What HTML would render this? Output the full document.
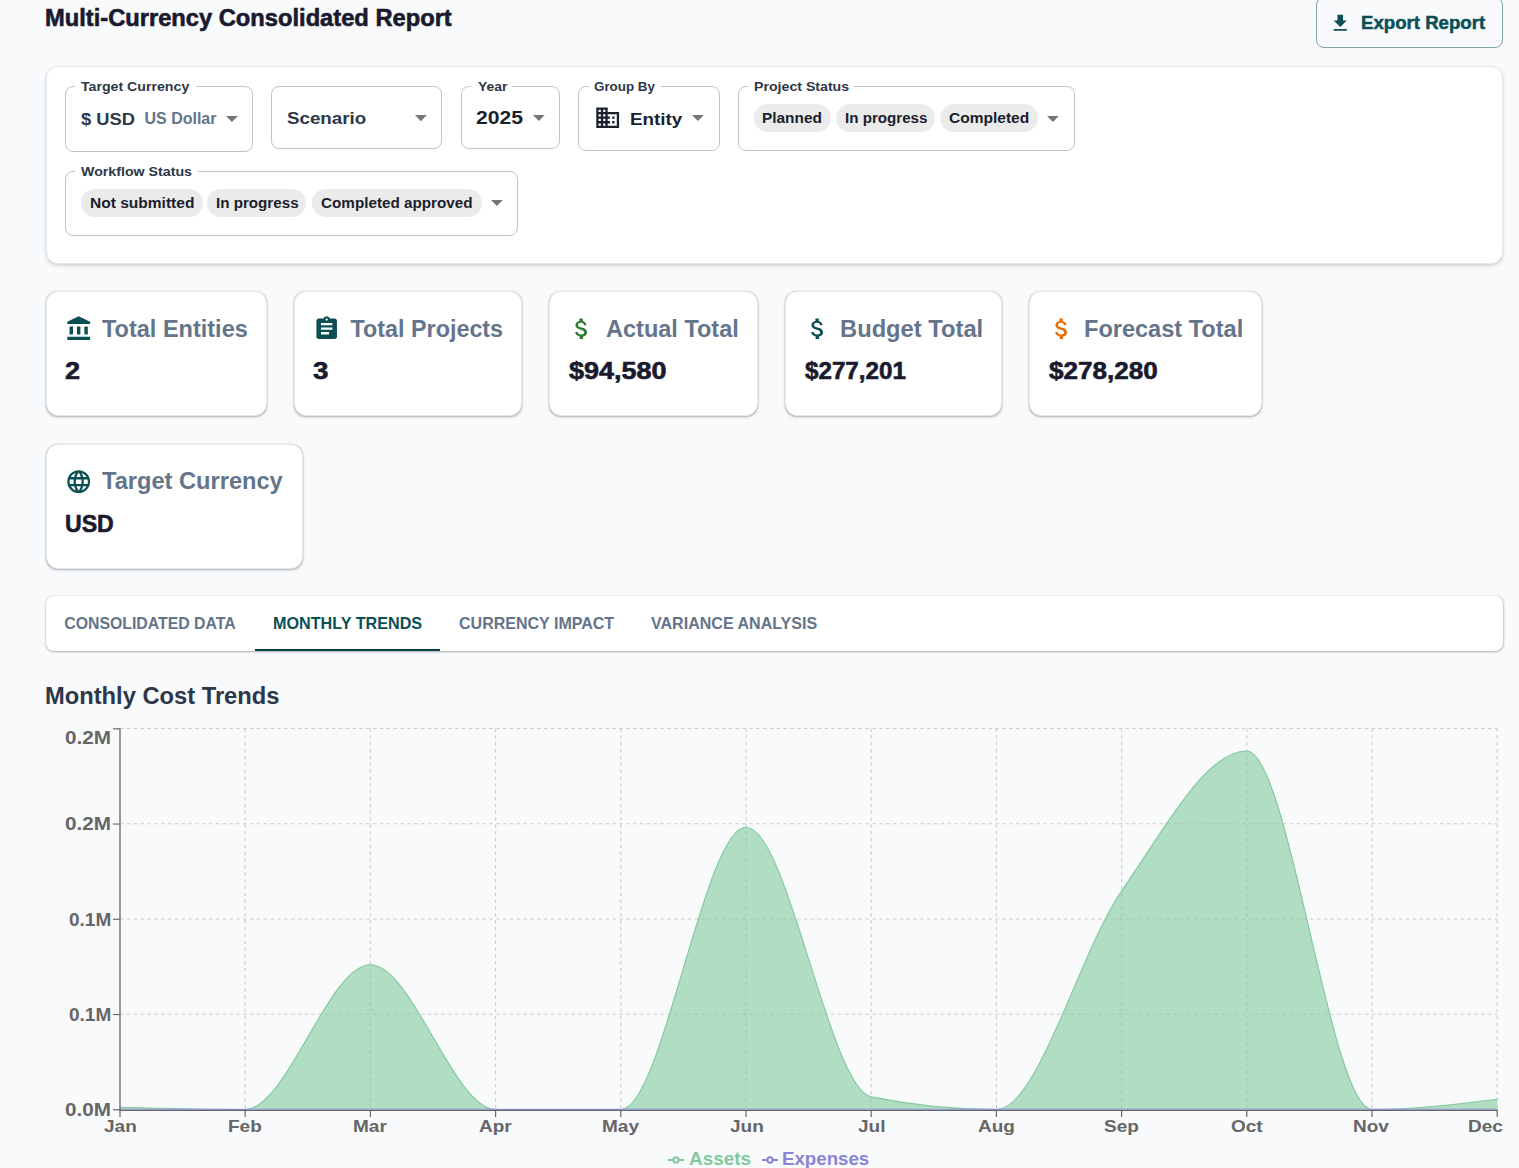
<!DOCTYPE html>
<html><head><meta charset="utf-8"><style>
html,body{margin:0;padding:0;}
body{width:1519px;height:1168px;overflow:hidden;position:relative;background:#f8fafc;font-family:"Liberation Sans",sans-serif;}
.t{position:absolute;line-height:1;white-space:nowrap;}
</style></head><body>
<div class="t" style="left:45.26px;top:7.00px;font-size:23.55px;color:#1a1a2e;font-weight:700;transform:scaleX(1.0062);transform-origin:0 0;-webkit-text-stroke:0.6px #1a1a2e;">Multi-Currency Consolidated Report</div>
<div style="position:absolute;left:1316px;top:-3px;width:187px;height:51px;box-sizing:border-box;border:1px solid rgba(11,79,85,0.5);border-radius:8px;"></div>
<svg style="position:absolute;left:1329.20px;top:12.00px" width="22.5" height="22.5" viewBox="0 0 24 24"><path fill="#0b4f55" d="M19 9h-4V3H9v6H5l7 7 7-7zM5 18v2h14v-2H5z"/></svg>
<div class="t" style="left:1360.74px;top:14.00px;font-size:18.53px;color:#0b4f55;font-weight:700;transform:scaleX(1.0055);transform-origin:0 0;-webkit-text-stroke:0.5px #0b4f55;">Export Report</div>
<div style="position:absolute;left:46px;top:66px;width:1457px;height:198px;box-sizing:border-box;background:#fff;border-radius:12px;border:1px solid #e2e8f0;box-shadow:0px 2px 4px rgba(0,0,0,0.12),0px 1px 2px rgba(0,0,0,0.06);"></div>
<div style="position:absolute;left:65px;top:86px;width:188px;height:66px;box-sizing:border-box;border:1px solid #c4c4c4;border-radius:8px;"></div>
<div style="position:absolute;left:75px;top:85px;width:121px;height:3px;box-sizing:border-box;background:#fff;"></div>
<div class="t" style="left:81.26px;top:80.00px;font-size:13.23px;color:#2d3748;font-weight:700;transform:scaleX(1.0704);transform-origin:0 0;">Target Currency</div>
<div class="t" style="left:81.42px;top:111.00px;font-size:17.15px;color:#2d3748;font-weight:700;transform:scaleX(1.0693);transform-origin:0 0;">$ USD</div>
<div class="t" style="left:144.54px;top:111.00px;font-size:15.99px;color:#64748b;font-weight:700;">US Dollar</div>
<svg style="position:absolute;left:225.9px;top:116px;overflow:visible" width="11.90" height="6.10" viewBox="0 0 10 5" preserveAspectRatio="none"><path fill="#757575" d="M0 0L5 5L10 0Z"/></svg>
<div style="position:absolute;left:271px;top:86px;width:171px;height:63px;box-sizing:border-box;border:1px solid #c4c4c4;border-radius:8px;"></div>
<div class="t" style="left:287.34px;top:110.00px;font-size:17.30px;color:#2d3748;font-weight:700;transform:scaleX(1.0853);transform-origin:0 0;">Scenario</div>
<svg style="position:absolute;left:415.2px;top:114.8px;overflow:visible" width="11.80" height="6.20" viewBox="0 0 10 5" preserveAspectRatio="none"><path fill="#757575" d="M0 0L5 5L10 0Z"/></svg>
<div style="position:absolute;left:461px;top:86px;width:99px;height:63px;box-sizing:border-box;border:1px solid #c4c4c4;border-radius:8px;"></div>
<div style="position:absolute;left:471px;top:85px;width:41px;height:3px;box-sizing:border-box;background:#fff;"></div>
<div class="t" style="left:477.52px;top:80.00px;font-size:13.37px;color:#2d3748;font-weight:700;transform:scaleX(1.0426);transform-origin:0 0;">Year</div>
<div class="t" style="left:476.46px;top:110.00px;font-size:17.44px;color:#1a202c;font-weight:700;transform:scaleX(1.2102);transform-origin:0 0;">2025</div>
<svg style="position:absolute;left:533.1px;top:115px;overflow:visible" width="11.70" height="6.10" viewBox="0 0 10 5" preserveAspectRatio="none"><path fill="#757575" d="M0 0L5 5L10 0Z"/></svg>
<div style="position:absolute;left:578px;top:86px;width:142px;height:65px;box-sizing:border-box;border:1px solid #c4c4c4;border-radius:8px;"></div>
<div style="position:absolute;left:589px;top:85px;width:72px;height:3px;box-sizing:border-box;background:#fff;"></div>
<div class="t" style="left:594.06px;top:80.00px;font-size:13.23px;color:#2d3748;font-weight:700;transform:scaleX(1.0125);transform-origin:0 0;">Group By</div>
<svg style="position:absolute;left:593.82px;top:103.98px" width="27.36" height="27.36" viewBox="0 0 24 24"><path fill="#1a202c" d="M12 7V3H2v18h20V7H12zM6 19H4v-2h2v2zm0-4H4v-2h2v2zm0-4H4V9h2v2zm0-4H4V5h2v2zm4 12H8v-2h2v2zm0-4H8v-2h2v2zm0-4H8V9h2v2zm0-4H8V5h2v2zm10 12h-8v-2h2v-2h-2v-2h2v-2h-2V9h8v10zm-2-8h-2v2h2v-2zm0 4h-2v2h2v-2z"/></svg>
<div class="t" style="left:630.48px;top:111.00px;font-size:17.15px;color:#1a202c;font-weight:700;transform:scaleX(1.0971);transform-origin:0 0;">Entity</div>
<svg style="position:absolute;left:692px;top:115.2px;overflow:visible" width="11.80" height="6.00" viewBox="0 0 10 5" preserveAspectRatio="none"><path fill="#757575" d="M0 0L5 5L10 0Z"/></svg>
<div style="position:absolute;left:738px;top:86px;width:337px;height:65px;box-sizing:border-box;border:1px solid #c4c4c4;border-radius:8px;"></div>
<div style="position:absolute;left:748px;top:85px;width:106px;height:3px;box-sizing:border-box;background:#fff;"></div>
<div class="t" style="left:753.68px;top:80.00px;font-size:13.23px;color:#2d3748;font-weight:700;transform:scaleX(1.0701);transform-origin:0 0;">Project Status</div>
<div style="position:absolute;left:754.3px;top:104.3px;width:76.30000000000007px;height:27.60000000000001px;box-sizing:border-box;background:#ebebeb;border-radius:14px;"></div>
<div class="t" style="left:762.40px;top:111.00px;font-size:14.68px;color:#1a202c;font-weight:700;transform:scaleX(1.0490);transform-origin:0 0;">Planned</div>
<div style="position:absolute;left:836.3px;top:104.3px;width:98.40000000000009px;height:27.60000000000001px;box-sizing:border-box;background:#ebebeb;border-radius:14px;"></div>
<div class="t" style="left:845.02px;top:111.00px;font-size:14.68px;color:#1a202c;font-weight:700;transform:scaleX(1.0320);transform-origin:0 0;">In progress</div>
<div style="position:absolute;left:940px;top:104.3px;width:97.70000000000005px;height:27.60000000000001px;box-sizing:border-box;background:#ebebeb;border-radius:14px;"></div>
<div class="t" style="left:949.08px;top:111.00px;font-size:14.68px;color:#1a202c;font-weight:700;transform:scaleX(1.0581);transform-origin:0 0;">Completed</div>
<svg style="position:absolute;left:1046.6px;top:115.8px;overflow:visible" width="11.80" height="6.00" viewBox="0 0 10 5" preserveAspectRatio="none"><path fill="#757575" d="M0 0L5 5L10 0Z"/></svg>
<div style="position:absolute;left:65px;top:171px;width:453px;height:65px;box-sizing:border-box;border:1px solid #c4c4c4;border-radius:8px;"></div>
<div style="position:absolute;left:75px;top:170px;width:123px;height:3px;box-sizing:border-box;background:#fff;"></div>
<div class="t" style="left:81.40px;top:166.00px;font-size:12.94px;color:#2d3748;font-weight:700;transform:scaleX(1.0977);transform-origin:0 0;">Workflow Status</div>
<div style="position:absolute;left:81px;top:189.1px;width:122px;height:27.700000000000017px;box-sizing:border-box;background:#ebebeb;border-radius:14px;"></div>
<div class="t" style="left:89.79px;top:196.00px;font-size:14.68px;color:#1a202c;font-weight:700;transform:scaleX(1.0585);transform-origin:0 0;">Not submitted</div>
<div style="position:absolute;left:207.2px;top:189.1px;width:99.30000000000001px;height:27.700000000000017px;box-sizing:border-box;background:#ebebeb;border-radius:14px;"></div>
<div class="t" style="left:215.61px;top:196.00px;font-size:14.68px;color:#1a202c;font-weight:700;transform:scaleX(1.0333);transform-origin:0 0;">In progress</div>
<div style="position:absolute;left:312.2px;top:189.1px;width:169.7px;height:27.700000000000017px;box-sizing:border-box;background:#ebebeb;border-radius:14px;"></div>
<div class="t" style="left:321.39px;top:196.00px;font-size:14.68px;color:#1a202c;font-weight:700;transform:scaleX(1.0391);transform-origin:0 0;">Completed approved</div>
<svg style="position:absolute;left:491.2px;top:200.3px;overflow:visible" width="11.80" height="6.00" viewBox="0 0 10 5" preserveAspectRatio="none"><path fill="#757575" d="M0 0L5 5L10 0Z"/></svg>
<div style="position:absolute;left:46px;top:291px;width:221px;height:125px;box-sizing:border-box;background:#fff;border-radius:12px;border:1px solid #e2e8f0;box-shadow:0px 1px 2px rgba(0,0,0,0.22),0px 0px 1.5px rgba(0,0,0,0.2),0px 2px 4px rgba(0,0,0,0.05);"></div>
<svg style="position:absolute;left:64.70px;top:315.00px" width="27.36" height="27.36" viewBox="0 0 24 24"><path fill="#0b4f55" d="M4 10h3v7H4zM10.5 10h3v7h-3zM2 19h20v3H2zM17 10h3v7h-3zM12 1 2 6v2h20V6z"/></svg>
<div class="t" style="left:102.17px;top:318.00px;font-size:23.33px;color:#64748b;font-weight:700;transform:scaleX(1.0071);transform-origin:0 0;">Total Entities</div>
<div class="t" style="left:64.95px;top:360.00px;font-size:23.55px;color:#1a1a2e;font-weight:700;transform:scaleX(1.1502);transform-origin:0 0;-webkit-text-stroke:0.6px #1a1a2e;">2</div>
<div style="position:absolute;left:294px;top:291px;width:228px;height:125px;box-sizing:border-box;background:#fff;border-radius:12px;border:1px solid #e2e8f0;box-shadow:0px 1px 2px rgba(0,0,0,0.22),0px 0px 1.5px rgba(0,0,0,0.2),0px 2px 4px rgba(0,0,0,0.05);"></div>
<svg style="position:absolute;left:312.70px;top:315.00px" width="27.36" height="27.36" viewBox="0 0 24 24"><path fill="#0b4f55" d="M19 3h-4.18C14.4 1.84 13.3 1 12 1c-1.3 0-2.4.84-2.82 2H5c-1.1 0-2 .9-2 2v14c0 1.1.9 2 2 2h14c1.1 0 2-.9 2-2V5c0-1.1-.9-2-2-2zm-7 0c.55 0 1 .45 1 1s-.45 1-1 1-1-.45-1-1 .45-1 1-1zm2 14H7v-2h7v2zm3-4H7v-2h10v2zm0-4H7V7h10v2z"/></svg>
<div class="t" style="left:350.57px;top:318.00px;font-size:23.33px;color:#64748b;font-weight:700;">Total Projects</div>
<div class="t" style="left:313.21px;top:360.00px;font-size:23.55px;color:#1a1a2e;font-weight:700;transform:scaleX(1.1754);transform-origin:0 0;-webkit-text-stroke:0.6px #1a1a2e;">3</div>
<div style="position:absolute;left:549px;top:291px;width:209px;height:125px;box-sizing:border-box;background:#fff;border-radius:12px;border:1px solid #e2e8f0;box-shadow:0px 1px 2px rgba(0,0,0,0.22),0px 0px 1.5px rgba(0,0,0,0.2),0px 2px 4px rgba(0,0,0,0.05);"></div>
<svg style="position:absolute;left:567.70px;top:315.00px" width="27.36" height="27.36" viewBox="0 0 24 24"><path fill="#2e7d32" d="M11.8 10.9c-2.27-.59-3-1.2-3-2.15 0-1.09 1.01-1.85 2.7-1.85 1.78 0 2.44.85 2.5 2.1h2.21c-.07-1.72-1.12-3.3-3.21-3.81V3h-3v2.16c-1.94.42-3.5 1.68-3.5 3.61 0 2.31 1.91 3.46 4.7 4.13 2.5.6 3 1.48 3 2.41 0 .69-.49 1.79-2.7 1.79-2.06 0-2.87-.92-2.98-2.1h-2.2c.12 2.19 1.76 3.42 3.9 3.87V21h3v-2.15c1.95-.37 3.5-1.5 3.5-3.55 0-2.84-2.43-3.81-4.7-4.4z"/></svg>
<div class="t" style="left:606.11px;top:318.00px;font-size:23.33px;color:#64748b;font-weight:700;transform:scaleX(1.0078);transform-origin:0 0;">Actual Total</div>
<div class="t" style="left:568.50px;top:360.00px;font-size:23.55px;color:#1a1a2e;font-weight:700;transform:scaleX(1.1464);transform-origin:0 0;-webkit-text-stroke:0.6px #1a1a2e;">$94,580</div>
<div style="position:absolute;left:785px;top:291px;width:217px;height:125px;box-sizing:border-box;background:#fff;border-radius:12px;border:1px solid #e2e8f0;box-shadow:0px 1px 2px rgba(0,0,0,0.22),0px 0px 1.5px rgba(0,0,0,0.2),0px 2px 4px rgba(0,0,0,0.05);"></div>
<svg style="position:absolute;left:803.70px;top:315.00px" width="27.36" height="27.36" viewBox="0 0 24 24"><path fill="#0b4f55" d="M11.8 10.9c-2.27-.59-3-1.2-3-2.15 0-1.09 1.01-1.85 2.7-1.85 1.78 0 2.44.85 2.5 2.1h2.21c-.07-1.72-1.12-3.3-3.21-3.81V3h-3v2.16c-1.94.42-3.5 1.68-3.5 3.61 0 2.31 1.91 3.46 4.7 4.13 2.5.6 3 1.48 3 2.41 0 .69-.49 1.79-2.7 1.79-2.06 0-2.87-.92-2.98-2.1h-2.2c.12 2.19 1.76 3.42 3.9 3.87V21h3v-2.15c1.95-.37 3.5-1.5 3.5-3.55 0-2.84-2.43-3.81-4.7-4.4z"/></svg>
<div class="t" style="left:840.26px;top:318.00px;font-size:23.33px;color:#64748b;font-weight:700;transform:scaleX(1.0170);transform-origin:0 0;">Budget Total</div>
<div class="t" style="left:804.54px;top:360.00px;font-size:23.55px;color:#1a1a2e;font-weight:700;transform:scaleX(1.0273);transform-origin:0 0;-webkit-text-stroke:0.6px #1a1a2e;">$277,201</div>
<div style="position:absolute;left:1029px;top:291px;width:233px;height:125px;box-sizing:border-box;background:#fff;border-radius:12px;border:1px solid #e2e8f0;box-shadow:0px 1px 2px rgba(0,0,0,0.22),0px 0px 1.5px rgba(0,0,0,0.2),0px 2px 4px rgba(0,0,0,0.05);"></div>
<svg style="position:absolute;left:1047.70px;top:315.00px" width="27.36" height="27.36" viewBox="0 0 24 24"><path fill="#ed6c02" d="M11.8 10.9c-2.27-.59-3-1.2-3-2.15 0-1.09 1.01-1.85 2.7-1.85 1.78 0 2.44.85 2.5 2.1h2.21c-.07-1.72-1.12-3.3-3.21-3.81V3h-3v2.16c-1.94.42-3.5 1.68-3.5 3.61 0 2.31 1.91 3.46 4.7 4.13 2.5.6 3 1.48 3 2.41 0 .69-.49 1.79-2.7 1.79-2.06 0-2.87-.92-2.98-2.1h-2.2c.12 2.19 1.76 3.42 3.9 3.87V21h3v-2.15c1.95-.37 3.5-1.5 3.5-3.55 0-2.84-2.43-3.81-4.7-4.4z"/></svg>
<div class="t" style="left:1084.07px;top:318.00px;font-size:23.33px;color:#64748b;font-weight:700;transform:scaleX(1.0093);transform-origin:0 0;">Forecast Total</div>
<div class="t" style="left:1048.51px;top:360.00px;font-size:23.55px;color:#1a1a2e;font-weight:700;transform:scaleX(1.1064);transform-origin:0 0;-webkit-text-stroke:0.6px #1a1a2e;">$278,280</div>
<div style="position:absolute;left:46px;top:444px;width:257px;height:125px;box-sizing:border-box;background:#fff;border-radius:12px;border:1px solid #e2e8f0;box-shadow:0px 1px 2px rgba(0,0,0,0.22),0px 0px 1.5px rgba(0,0,0,0.2),0px 2px 4px rgba(0,0,0,0.05);"></div>
<svg style="position:absolute;left:64.70px;top:468.00px" width="27.36" height="27.36" viewBox="0 0 24 24"><path fill="#0b4f55" d="M11.99 2C6.47 2 2 6.48 2 12s4.47 10 9.99 10C17.52 22 22 17.52 22 12S17.52 2 11.99 2zm6.93 6h-2.95c-.32-1.25-.78-2.45-1.38-3.56 1.84.63 3.37 1.91 4.33 3.56zM12 4.04c.83 1.2 1.48 2.53 1.91 3.96h-3.82c.43-1.43 1.08-2.76 1.91-3.96zM4.26 14C4.1 13.36 4 12.69 4 12s.1-1.36.26-2h3.38c-.08.66-.14 1.32-.14 2 0 .68.06 1.34.14 2H4.26zm.82 2h2.95c.32 1.25.78 2.45 1.38 3.56-1.84-.63-3.37-1.9-4.33-3.56zm2.95-8H5.08c.96-1.66 2.49-2.93 4.33-3.56C8.81 5.55 8.35 6.75 8.03 8zM12 19.96c-.83-1.2-1.48-2.53-1.91-3.96h3.82c-.43 1.43-1.08 2.76-1.91 3.96zM14.34 14H9.66c-.09-.66-.16-1.32-.16-2 0-.68.07-1.35.16-2h4.68c.09.65.16 1.32.16 2 0 .68-.07 1.34-.16 2zm.25 5.56c.6-1.11 1.06-2.31 1.38-3.56h2.95c-.96 1.65-2.49 2.93-4.33 3.56zM16.36 14c.08-.66.14-1.32.14-2 0-.68-.06-1.34-.14-2h3.38c.16.64.26 1.31.26 2s-.1 1.36-.26 2h-3.38z"/></svg>
<div class="t" style="left:101.96px;top:470.00px;font-size:23.11px;color:#64748b;font-weight:700;transform:scaleX(1.0224);transform-origin:0 0;">Target Currency</div>
<div class="t" style="left:64.71px;top:512.00px;font-size:23.84px;color:#1a1a2e;font-weight:700;transform:scaleX(0.9705);transform-origin:0 0;-webkit-text-stroke:0.6px #1a1a2e;">USD</div>
<div style="position:absolute;left:46px;top:596px;width:1457px;height:55px;box-sizing:border-box;background:#fff;border-radius:8px;box-shadow:0px 1px 2px rgba(0,0,0,0.22),0.5px 0px 2px rgba(0,0,0,0.14),0px 1px 4px rgba(0,0,0,0.06);"></div>
<div class="t" style="left:64.27px;top:616.00px;font-size:15.84px;color:#64748b;font-weight:700;">CONSOLIDATED DATA</div>
<div class="t" style="left:272.85px;top:616.00px;font-size:15.84px;color:#0b4f55;font-weight:700;transform:scaleX(1.0215);transform-origin:0 0;">MONTHLY TRENDS</div>
<div class="t" style="left:458.66px;top:616.00px;font-size:15.84px;color:#64748b;font-weight:700;transform:scaleX(1.0121);transform-origin:0 0;">CURRENCY IMPACT</div>
<div class="t" style="left:650.92px;top:616.00px;font-size:15.84px;color:#64748b;font-weight:700;transform:scaleX(1.0138);transform-origin:0 0;">VARIANCE ANALYSIS</div>
<div style="position:absolute;left:255px;top:649px;width:185px;height:2px;box-sizing:border-box;background:#06454c;"></div>
<div class="t" style="left:45.26px;top:685.00px;font-size:23.11px;color:#2d3748;font-weight:700;transform:scaleX(1.0259);transform-origin:0 0;">Monthly Cost Trends</div>
<svg style="position:absolute;left:0;top:0" width="1519" height="1168"><line x1="120" y1="728.5" x2="1497.2" y2="728.5" stroke="#ccc" stroke-width="1.14" stroke-dasharray="3.42 3.42"/><line x1="120" y1="823.75" x2="1497.2" y2="823.75" stroke="#ccc" stroke-width="1.14" stroke-dasharray="3.42 3.42"/><line x1="120" y1="919" x2="1497.2" y2="919" stroke="#ccc" stroke-width="1.14" stroke-dasharray="3.42 3.42"/><line x1="120" y1="1014.25" x2="1497.2" y2="1014.25" stroke="#ccc" stroke-width="1.14" stroke-dasharray="3.42 3.42"/><line x1="245.20" y1="728.5" x2="245.20" y2="1109.5" stroke="#ccc" stroke-width="1.14" stroke-dasharray="3.42 3.42"/><line x1="370.40" y1="728.5" x2="370.40" y2="1109.5" stroke="#ccc" stroke-width="1.14" stroke-dasharray="3.42 3.42"/><line x1="495.60" y1="728.5" x2="495.60" y2="1109.5" stroke="#ccc" stroke-width="1.14" stroke-dasharray="3.42 3.42"/><line x1="620.80" y1="728.5" x2="620.80" y2="1109.5" stroke="#ccc" stroke-width="1.14" stroke-dasharray="3.42 3.42"/><line x1="746.00" y1="728.5" x2="746.00" y2="1109.5" stroke="#ccc" stroke-width="1.14" stroke-dasharray="3.42 3.42"/><line x1="871.20" y1="728.5" x2="871.20" y2="1109.5" stroke="#ccc" stroke-width="1.14" stroke-dasharray="3.42 3.42"/><line x1="996.40" y1="728.5" x2="996.40" y2="1109.5" stroke="#ccc" stroke-width="1.14" stroke-dasharray="3.42 3.42"/><line x1="1121.60" y1="728.5" x2="1121.60" y2="1109.5" stroke="#ccc" stroke-width="1.14" stroke-dasharray="3.42 3.42"/><line x1="1246.80" y1="728.5" x2="1246.80" y2="1109.5" stroke="#ccc" stroke-width="1.14" stroke-dasharray="3.42 3.42"/><line x1="1372.00" y1="728.5" x2="1372.00" y2="1109.5" stroke="#ccc" stroke-width="1.14" stroke-dasharray="3.42 3.42"/><line x1="1497.20" y1="728.5" x2="1497.20" y2="1109.5" stroke="#ccc" stroke-width="1.14" stroke-dasharray="3.42 3.42"/><path d="M120.00,1107.30C161.73,1108.40,203.47,1109.50,245.20,1109.50C286.93,1109.50,328.67,964.70,370.40,964.70C412.13,964.70,453.87,1109.50,495.60,1109.50C537.33,1109.50,579.07,1109.50,620.80,1109.50C662.53,1109.50,704.27,827.30,746.00,827.30C787.73,827.30,829.47,1088.50,871.20,1096.90C912.93,1105.30,954.67,1109.50,996.40,1109.50C1038.13,1109.50,1079.87,950.75,1121.60,891.00C1163.33,831.25,1205.07,751.00,1246.80,751.00C1288.53,751.00,1330.27,1109.50,1372.00,1109.50C1413.73,1109.50,1455.47,1104.35,1497.20,1099.20L1497.20,1109.50L120.00,1109.50Z" fill="#82ca9d" fill-opacity="0.6" stroke="none"/><path d="M120.00,1107.30C161.73,1108.40,203.47,1109.50,245.20,1109.50C286.93,1109.50,328.67,964.70,370.40,964.70C412.13,964.70,453.87,1109.50,495.60,1109.50C537.33,1109.50,579.07,1109.50,620.80,1109.50C662.53,1109.50,704.27,827.30,746.00,827.30C787.73,827.30,829.47,1088.50,871.20,1096.90C912.93,1105.30,954.67,1109.50,996.40,1109.50C1038.13,1109.50,1079.87,950.75,1121.60,891.00C1163.33,831.25,1205.07,751.00,1246.80,751.00C1288.53,751.00,1330.27,1109.50,1372.00,1109.50C1413.73,1109.50,1455.47,1104.35,1497.20,1099.20" fill="none" stroke="#82ca9d" stroke-width="1.14"/><line x1="119.5" y1="1110.4" x2="1497.7" y2="1110.4" stroke="#666" stroke-width="1.14"/><line x1="120" y1="1109.3" x2="1497.2" y2="1109.3" stroke="#8884d8" stroke-width="1.14" stroke-opacity="0.85"/><line x1="120" y1="728.2" x2="120" y2="1110.5" stroke="#666" stroke-width="1.3"/><line x1="113" y1="728.8" x2="120" y2="728.8" stroke="#666" stroke-width="1.14"/><line x1="113" y1="824.05" x2="120" y2="824.05" stroke="#666" stroke-width="1.14"/><line x1="113" y1="919.3" x2="120" y2="919.3" stroke="#666" stroke-width="1.14"/><line x1="113" y1="1014.55" x2="120" y2="1014.55" stroke="#666" stroke-width="1.14"/><line x1="113" y1="1109.8" x2="120" y2="1109.8" stroke="#666" stroke-width="1.14"/><line x1="120.00" y1="1110" x2="120.00" y2="1117" stroke="#666" stroke-width="1.2"/><line x1="245.20" y1="1110" x2="245.20" y2="1117" stroke="#666" stroke-width="1.2"/><line x1="370.40" y1="1110" x2="370.40" y2="1117" stroke="#666" stroke-width="1.2"/><line x1="495.60" y1="1110" x2="495.60" y2="1117" stroke="#666" stroke-width="1.2"/><line x1="620.80" y1="1110" x2="620.80" y2="1117" stroke="#666" stroke-width="1.2"/><line x1="746.00" y1="1110" x2="746.00" y2="1117" stroke="#666" stroke-width="1.2"/><line x1="871.20" y1="1110" x2="871.20" y2="1117" stroke="#666" stroke-width="1.2"/><line x1="996.40" y1="1110" x2="996.40" y2="1117" stroke="#666" stroke-width="1.2"/><line x1="1121.60" y1="1110" x2="1121.60" y2="1117" stroke="#666" stroke-width="1.2"/><line x1="1246.80" y1="1110" x2="1246.80" y2="1117" stroke="#666" stroke-width="1.2"/><line x1="1372.00" y1="1110" x2="1372.00" y2="1117" stroke="#666" stroke-width="1.2"/><line x1="1497.20" y1="1110" x2="1497.20" y2="1117" stroke="#666" stroke-width="1.2"/></svg>
<div class="t" style="left:65.17px;top:729.00px;font-size:18.02px;color:#666;font-weight:700;transform:scaleX(1.1490);transform-origin:0 0;">0.2M</div>
<div class="t" style="left:65.17px;top:815.00px;font-size:18.02px;color:#666;font-weight:700;transform:scaleX(1.1490);transform-origin:0 0;">0.2M</div>
<div class="t" style="left:68.84px;top:911.00px;font-size:18.02px;color:#666;font-weight:700;transform:scaleX(1.0546);transform-origin:0 0;">0.1M</div>
<div class="t" style="left:68.84px;top:1006.00px;font-size:18.02px;color:#666;font-weight:700;transform:scaleX(1.0546);transform-origin:0 0;">0.1M</div>
<div class="t" style="left:65.17px;top:1101.00px;font-size:18.02px;color:#666;font-weight:700;transform:scaleX(1.1490);transform-origin:0 0;">0.0M</div>
<div class="t" style="left:104.06px;top:1118.00px;font-size:17.15px;color:#666;font-weight:700;transform:scaleX(1.1094);transform-origin:0 0;">Jan</div>
<div class="t" style="left:228.08px;top:1118.00px;font-size:17.15px;color:#666;font-weight:700;transform:scaleX(1.1094);transform-origin:0 0;">Feb</div>
<div class="t" style="left:352.99px;top:1118.00px;font-size:17.15px;color:#666;font-weight:700;transform:scaleX(1.1094);transform-origin:0 0;">Mar</div>
<div class="t" style="left:479.09px;top:1118.00px;font-size:17.15px;color:#666;font-weight:700;transform:scaleX(1.1094);transform-origin:0 0;">Apr</div>
<div class="t" style="left:601.73px;top:1118.00px;font-size:17.15px;color:#666;font-weight:700;transform:scaleX(1.1094);transform-origin:0 0;">May</div>
<div class="t" style="left:729.54px;top:1118.00px;font-size:17.15px;color:#666;font-weight:700;transform:scaleX(1.1094);transform-origin:0 0;">Jun</div>
<div class="t" style="left:857.98px;top:1118.00px;font-size:17.15px;color:#666;font-weight:700;transform:scaleX(1.1094);transform-origin:0 0;">Jul</div>
<div class="t" style="left:978.28px;top:1118.00px;font-size:17.15px;color:#666;font-weight:700;transform:scaleX(1.1094);transform-origin:0 0;">Aug</div>
<div class="t" style="left:1104.24px;top:1118.00px;font-size:17.15px;color:#666;font-weight:700;transform:scaleX(1.1094);transform-origin:0 0;">Sep</div>
<div class="t" style="left:1230.67px;top:1118.00px;font-size:17.15px;color:#666;font-weight:700;transform:scaleX(1.1094);transform-origin:0 0;">Oct</div>
<div class="t" style="left:1353.45px;top:1118.00px;font-size:17.15px;color:#666;font-weight:700;transform:scaleX(1.1094);transform-origin:0 0;">Nov</div>
<div class="t" style="left:1468.06px;top:1118.00px;font-size:17.15px;color:#666;font-weight:700;transform:scaleX(1.1094);transform-origin:0 0;">Dec</div>
<svg style="position:absolute;left:668.2px;top:1151.5px" width="16" height="16" viewBox="0 0 32 32"><path stroke-width="4" fill="none" stroke="#82ca9d" d="M0,16h10.667A5.333,5.333,0,1,1,21.333,16H32M21.333,16A5.333,5.333,0,1,1,10.667,16"/></svg>
<div class="t" style="left:688.73px;top:1151.00px;font-size:17.44px;color:#82ca9d;font-weight:700;transform:scaleX(1.0843);transform-origin:0 0;">Assets</div>
<svg style="position:absolute;left:762.2px;top:1151.5px" width="16" height="16" viewBox="0 0 32 32"><path stroke-width="4" fill="none" stroke="#8884d8" d="M0,16h10.667A5.333,5.333,0,1,1,21.333,16H32M21.333,16A5.333,5.333,0,1,1,10.667,16"/></svg>
<div class="t" style="left:782.29px;top:1151.00px;font-size:17.44px;color:#8884d8;font-weight:700;transform:scaleX(1.0713);transform-origin:0 0;">Expenses</div>
</body></html>
